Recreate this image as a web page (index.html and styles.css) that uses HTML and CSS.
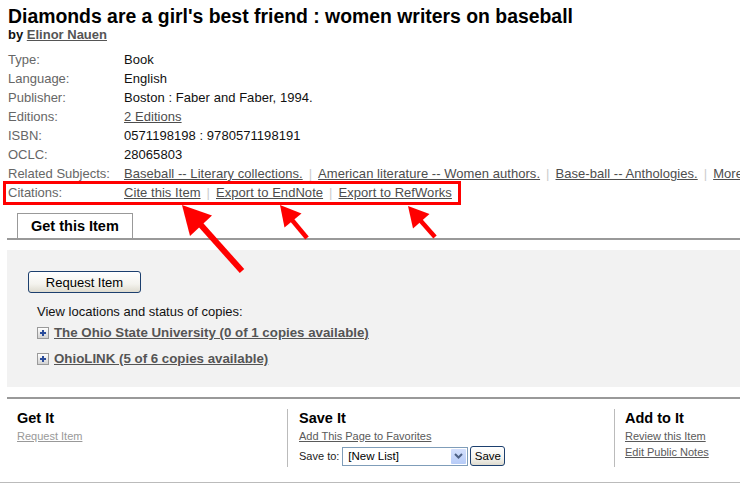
FILE: index.html
```html
<!DOCTYPE html>
<html lang="en">
<head>
    <meta charset="UTF-8">
    <meta name="viewport" content="width=device-width, initial-scale=1.0">
    <title>Diamonds are a girl's best friend</title>
    <link rel="stylesheet" href="styles.css">
</head>
<body>
    <div class="record">
        <h1 class="title">Diamonds are a girl's best friend : women writers on baseball</h1>
        <div class="author">by <a href="#">Elinor Nauen</a></div>

        <dl class="details">
            <dt>Type:</dt><dd>Book</dd>
            <dt>Language:</dt><dd>English</dd>
            <dt>Publisher:</dt><dd>Boston : Faber and Faber, 1994.</dd>
            <dt>Editions:</dt><dd><a href="#">2 Editions</a></dd>
            <dt>ISBN:</dt><dd>0571198198 : 9780571198191</dd>
            <dt>OCLC:</dt><dd>28065803</dd>
            <dt>Related Subjects:</dt>
            <dd>
                <a href="#">Baseball -- Literary collections.</a><span class="sep">|</span><a href="#">American literature -- Women authors.</a><span class="sep">|</span><a href="#">Base-ball -- Anthologies.</a><span class="sep">|</span><a href="#">More</a>
            </dd>
            <dt>Citations:</dt>
            <dd>
                <a href="#">Cite this Item</a><span class="sep">|</span><a href="#">Export to EndNote</a><span class="sep">|</span><a href="#">Export to RefWorks</a>
            </dd>
        </dl>
    </div>

    <div class="tabs">
        <span class="tab">Get this Item</span>
    </div>

    <div class="holdings">
        <button type="button" class="xp-btn request-btn">Request Item</button>
        <p class="loc-intro">View locations and status of copies:</p>
        <div class="loc"><span class="plus"></span><a href="#">The Ohio State University (0 of 1 copies available)</a></div>
        <div class="loc"><span class="plus"></span><a href="#">OhioLINK (5 of 6 copies available)</a></div>
    </div>

    <div class="actions">
        <div class="col col-get">
            <h3>Get It</h3>
            <a href="#" class="faint">Request Item</a>
        </div>
        <div class="col col-save">
            <h3>Save It</h3>
            <a href="#">Add This Page to Favorites</a>
            <div class="save-row">
                <span>Save to:</span>
                <div class="fake-select">
                    <span class="sel-text">[New List]</span>
                    <span class="sel-arrow">
                        <svg width="9" height="6" viewBox="0 0 9 6"><path d="M1 1 L4.5 4.5 L8 1" fill="none" stroke="#4d6185" stroke-width="2"/></svg>
                    </span>
                </div>
                <button type="button" class="xp-btn save-btn">Save</button>
            </div>
        </div>
        <div class="col col-add">
            <h3>Add to It</h3>
            <a href="#">Review this Item</a>
            <a href="#">Edit Public Notes</a>
        </div>
    </div>
    <div class="bottom-rule"></div>

    <!-- red annotation drawn over the page -->
    <svg class="markup" width="740" height="499" viewBox="0 0 740 499">
        <rect x="4.5" y="182.5" width="455" height="21" fill="none" stroke="#f00" stroke-width="3"/>
        <line x1="200" y1="224" x2="242" y2="271" stroke="#f00" stroke-width="6"/>
        <polygon points="182,205 212,215.5 190,236" fill="#f00"/>
        <line x1="292" y1="220" x2="307" y2="238" stroke="#f00" stroke-width="4.5"/>
        <polygon points="280,205 301.5,213.5 284.5,227.5" fill="#f00"/>
        <line x1="420" y1="220" x2="435" y2="237" stroke="#f00" stroke-width="4.5"/>
        <polygon points="408,206 429.5,214 413,228.5" fill="#f00"/>
    </svg>
</body>
</html>
```

FILE: styles.css
```css
body {
    margin: 0;
    font-family: "Liberation Sans", Arial, sans-serif;
    font-size: 13px;
    color: #111;
    background-color: #fff;
    position: relative;
    width: 740px;
    height: 499px;
    overflow: hidden;
}
a {
    color: #4d4d4d;
}
.record {
    padding-left: 8px;
}
.title {
    margin: 5px 0 0;
    font-size: 19.4px;
    line-height: 22px;
    color: #000;
    white-space: nowrap;
}
.author {
    font-weight: bold;
    line-height: 16px;
}
.author a {
    color: #555;
}
.details {
    display: grid;
    grid-template-columns: 116px auto;
    margin: 7px 0 0;
    line-height: 19px;
}
.details dt {
    color: #666;
}
.details dd {
    margin: 0;
    white-space: nowrap;
    letter-spacing: 0.05px;
}
.sep {
    color: #ccc;
    margin: 0 6px;
}
.tabs {
    display: flex;
    margin: 11px 0 0 7px;
    padding-left: 10px;
    border-bottom: 2px solid #999;
}
.tab {
    border: 1px solid #999;
    border-bottom: none;
    padding: 1px 13px 0;
    line-height: 23px;
    font-size: 14.5px;
    font-weight: bold;
    color: #000;
}
.holdings {
    margin: 10px 0 0 7px;
    background-color: #f2f2f2;
    padding: 21px 0 0 21px;
    height: 116px;
}
.xp-btn {
    font-family: "Liberation Sans", Arial, sans-serif;
    color: #000;
    border: 1px solid #1c3f6e;
    border-radius: 3px;
    background: linear-gradient(#ffffff, #f4f3ee 60%, #dedbcf);
    padding: 0;
    cursor: pointer;
}
.request-btn {
    width: 113px;
    height: 22px;
    font-size: 13px;
}
.loc-intro {
    margin: 11px 0 0 9px;
    line-height: 16px;
}
.loc {
    display: flex;
    align-items: center;
    margin: 5px 0 0 9px;
    line-height: 16px;
}
.loc + .loc {
    margin-top: 10px;
}
.loc a {
    font-weight: bold;
    font-size: 13.3px;
    color: #555;
}
.plus {
    position: relative;
    width: 10px;
    height: 10px;
    margin-right: 5px;
    border: 1px solid #9a9a9a;
    background: linear-gradient(#ffffff, #d2d2d2);
}
.plus::before, .plus::after {
    content: "";
    position: absolute;
    background-color: #2a4c9a;
}
.plus::before {
    left: 2px;
    top: 4px;
    width: 6px;
    height: 2px;
}
.plus::after {
    left: 4px;
    top: 2px;
    width: 2px;
    height: 6px;
}
.actions {
    display: flex;
    margin: 10px 0 0 7px;
    padding-top: 10px;
    border-top: 2px solid #999;
}
.col {
    display: flex;
    flex-direction: column;
    align-items: flex-start;
    min-height: 58px;
    font-size: 11px;
    line-height: 16px;
}
.col h3 {
    margin: 0;
    font-size: 14.5px;
    line-height: 19px;
    color: #000;
}
.col a {
    color: #5a5a5a;
}
.col a.faint {
    color: #999;
}
.col-get {
    width: 270px;
    padding-left: 10px;
}
.col-save {
    width: 315px;
    padding-left: 11px;
    border-left: 1px solid #bbb;
}
.col-add {
    padding-left: 10px;
    border-left: 1px solid #bbb;
}
.save-row {
    display: flex;
    align-items: center;
    margin-top: 2px;
    color: #222;
}
.fake-select {
    display: flex;
    align-items: stretch;
    width: 124px;
    height: 17px;
    margin-left: 3px;
    border: 1px solid #7f9db9;
    background-color: #fff;
}
.sel-text {
    flex: 1;
    padding-left: 5px;
    font-size: 11.5px;
    line-height: 17px;
    color: #000;
}
.sel-arrow {
    display: flex;
    align-items: center;
    justify-content: center;
    width: 15px;
    margin: 1px;
    background: linear-gradient(#d4e0fd, #b6cbf7);
    border-radius: 1px;
}
.save-btn {
    width: 35px;
    height: 20px;
    margin-left: 2px;
    font-size: 11.5px;
}
.bottom-rule {
    margin-top: 15px;
    border-top: 1px solid #bbb;
}
.markup {
    position: absolute;
    top: 0;
    left: 0;
    pointer-events: none;
}
```
